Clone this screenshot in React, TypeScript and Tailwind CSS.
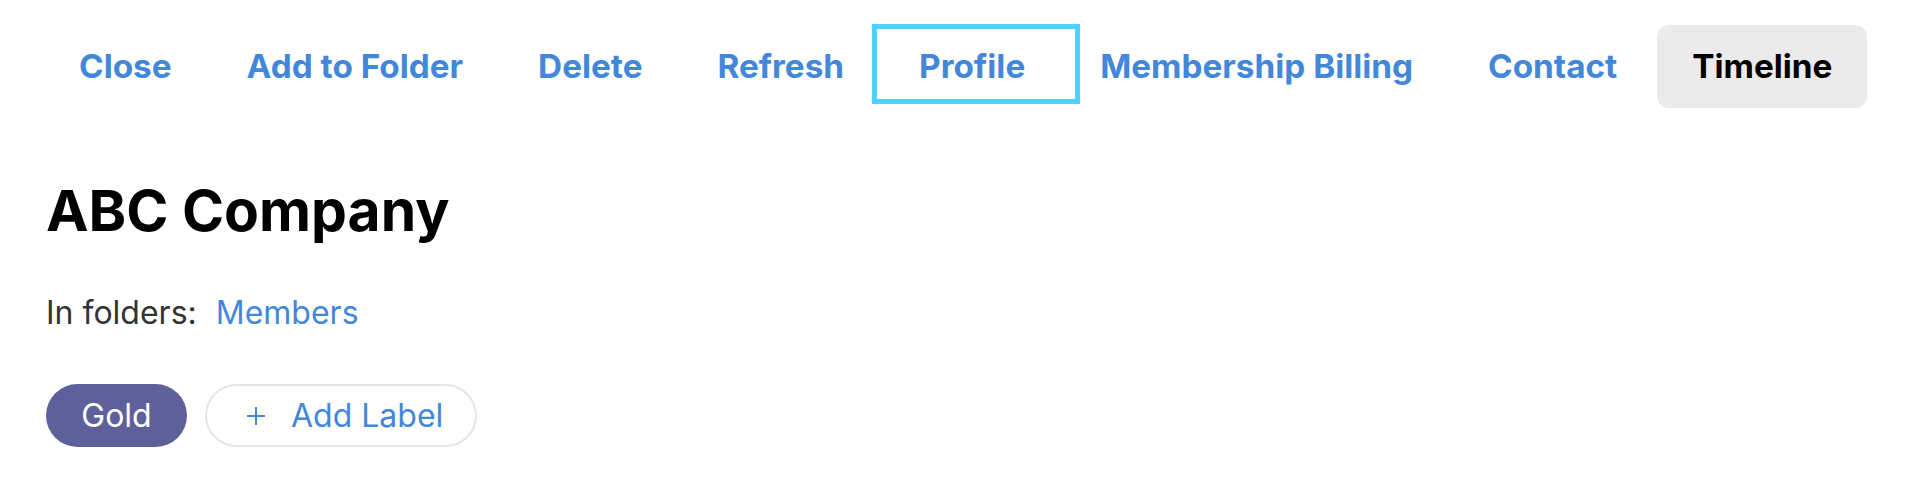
import { useState } from "react";

const navItems = [
  "Close",
  "Add to Folder",
  "Delete",
  "Refresh",
  "Profile",
  "Membership Billing",
  "Contact",
  "Timeline",
];

function PlusIcon() {
  return (
    <svg width="20" height="20" viewBox="0 0 20 20" className="shrink-0">
      <line x1="10" y1="1" x2="10" y2="19" stroke="#4387db" strokeWidth="2" />
      <line x1="1" y1="10" x2="19" y2="10" stroke="#4387db" strokeWidth="2" />
    </svg>
  );
}

export default function App() {
  const [active] = useState("Timeline");
  const focused = "Profile";

  return (
    <div className="w-full h-[490px] bg-white font-['Inter',sans-serif] overflow-hidden">
      {/* Top actions */}
      <nav className="flex items-center gap-[5px] pl-[44px] pt-[25px]">
        {navItems.map((item) => (
          <button
            key={item}
            className={
              "relative h-[83px] px-[35px] rounded-[12px] text-[33.3px] font-bold whitespace-nowrap " +
              (item === active
                ? "bg-[#ebebeb] text-black"
                : "text-[#4387db]")
            }
          >
            {item}
            {item === focused && (
              <span className="absolute left-[-12px] right-[-20px] top-[-1px] bottom-[4px] border-[5px] border-[#4fd1ff] pointer-events-none"></span>
            )}
          </button>
        ))}
      </nav>

      {/* Record header */}
      <div className="pl-[46px]">
        <h1 className="mt-[68px] text-[57px] leading-[70px] font-bold text-black">
          ABC Company
        </h1>

        <div className="mt-[47px] flex items-center gap-[19px] text-[32px] leading-[40px]">
          <span className="text-[#333333]">In folders:</span>
          <a className="text-[#4387db]">Members</a>
        </div>

        <div className="mt-[51px] flex items-center gap-[18px]">
          <span className="h-[63px] w-[141px] rounded-full bg-[#5e609b] text-white text-[32px] flex items-center justify-center">
            Gold
          </span>
          <button className="h-[63px] w-[272px] rounded-full border-2 border-[#e6e6e6] flex items-center pl-[39px] gap-[25px] text-[32px] text-[#4387db]">
            <PlusIcon />
            Add Label
          </button>
        </div>
      </div>
    </div>
  );
}
